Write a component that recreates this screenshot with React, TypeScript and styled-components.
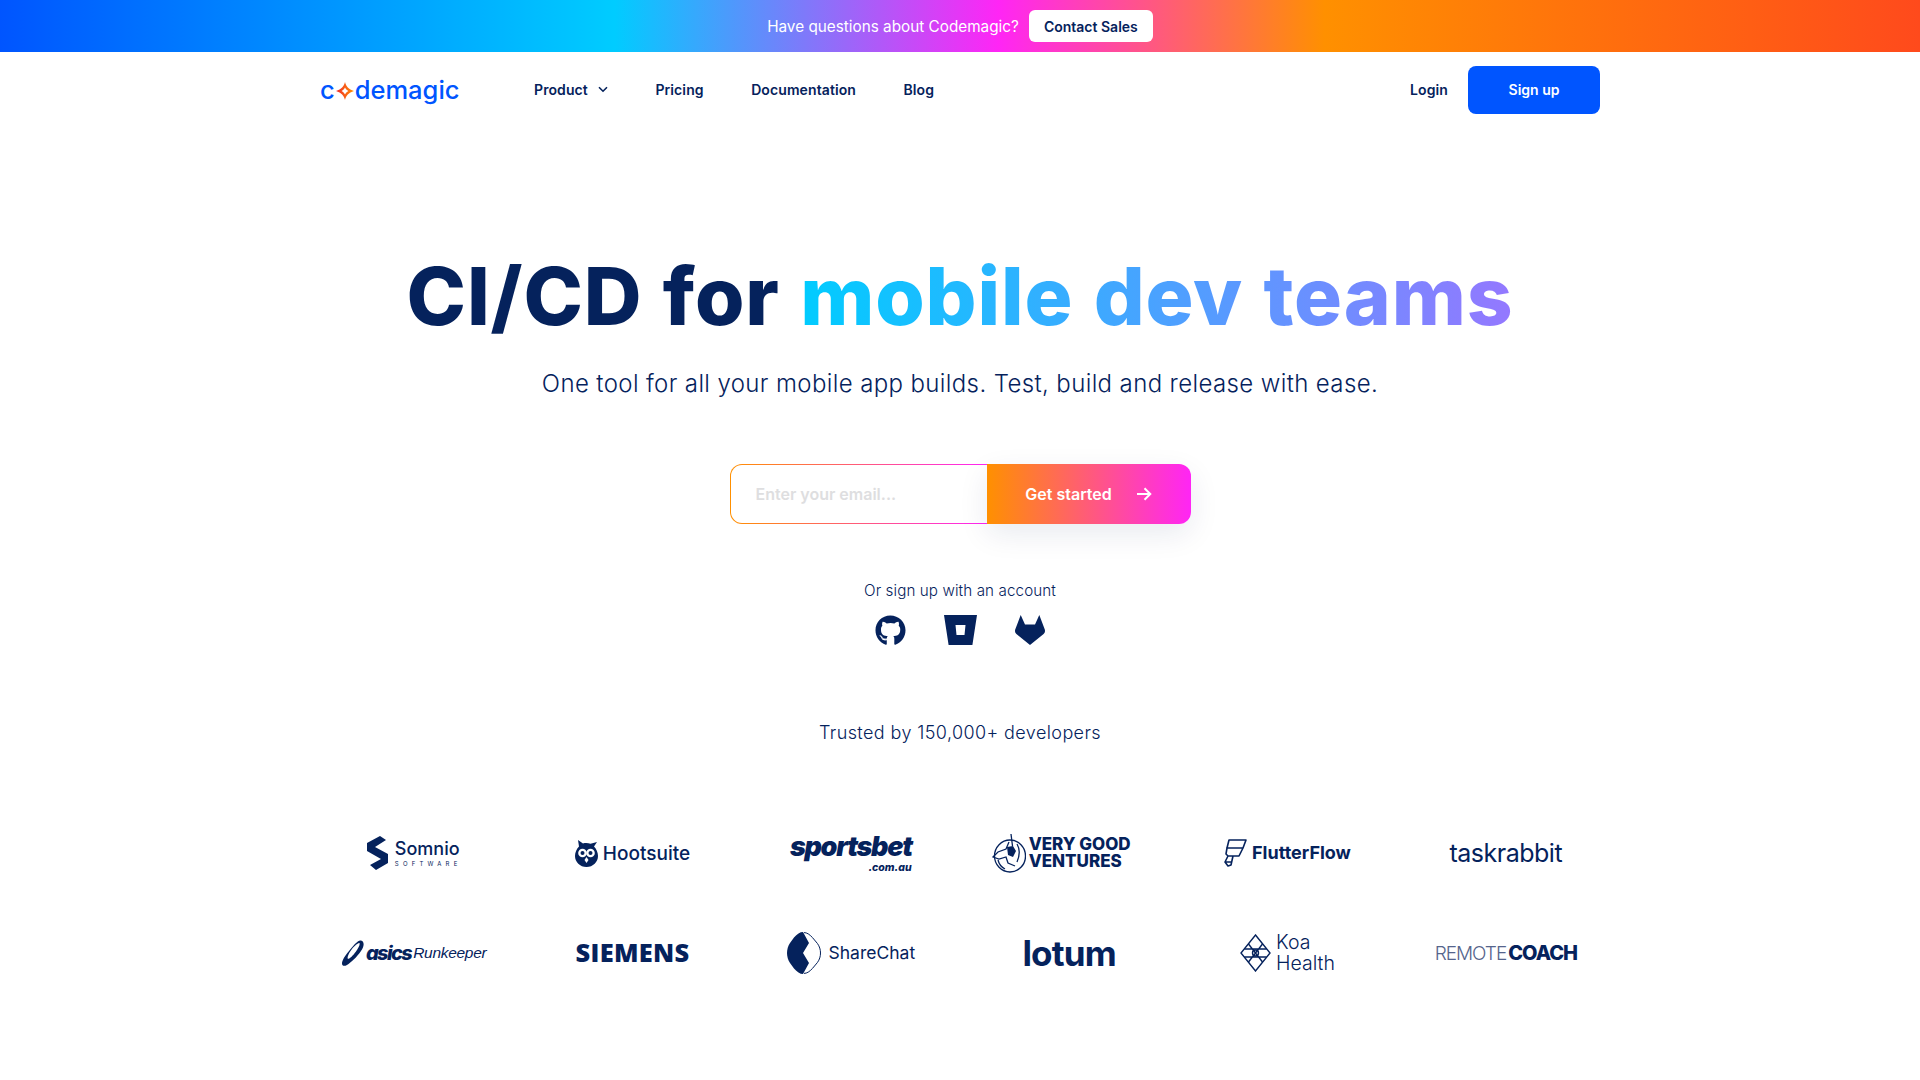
import React from 'react';
import styled, { createGlobalStyle } from 'styled-components';
import { FaGithub } from 'react-icons/fa';

const navy = '#05225c';
const blue = '#0055ff';

const GlobalStyle = createGlobalStyle`
  html, body {
    margin: 0;
    padding: 0;
    background: #fff;
    color: ${navy};
    font-family: Inter, "Open Sans", sans-serif;
  }
  * {
    box-sizing: border-box;
  }
`;

const Banner = styled.div`
  height: 52px;
  display: flex;
  align-items: center;
  justify-content: center;
  gap: 10px;
  background: linear-gradient(90deg, #0055ff 0%, #00ccff 32%, #ff25f5 52%, #ff9000 69%, #ff4a1c 100%);
`;

const BannerText = styled.span`
  color: #fff;
  font-size: 15.3px;
`;

const ContactButton = styled.a`
  width: 124px;
  height: 32px;
  display: flex;
  align-items: center;
  justify-content: center;
  background: #fff;
  border-radius: 6px;
  color: ${navy};
  font-size: 14px;
  font-weight: 600;
`;

const Container = styled.div`
  width: 1280px;
  margin: 0 auto;
`;

const Nav = styled(Container)`
  height: 75px;
  display: flex;
  align-items: center;
`;

const Logo = styled.div`
  width: 214px;
  display: flex;
  align-items: center;
  color: ${blue};
  font-size: 25.5px;
  font-weight: 500;
  line-height: 1;
  svg {
    margin: 2px 1px 0 1px;
  }
`;

const NavLinks = styled.div`
  flex: 1;
  display: flex;
  align-items: center;
  gap: 47.5px;
`;

const NavLink = styled.a`
  display: flex;
  align-items: center;
  gap: 10px;
  color: ${navy};
  font-size: 14px;
  font-weight: 600;
  letter-spacing: 0.1px;
`;

const SignUp = styled.a`
  width: 132px;
  height: 48px;
  margin-left: 20px;
  display: flex;
  align-items: center;
  justify-content: center;
  background: ${blue};
  border-radius: 8px;
  color: #fff;
  font-size: 14px;
  font-weight: 600;
`;

const Hero = styled.main`
  display: flex;
  flex-direction: column;
  align-items: center;
`;

const Title = styled.h1`
  margin: 119px 0 0;
  font-size: 80px;
  line-height: 100px;
  font-weight: 800;
  letter-spacing: 0.85px;
  word-spacing: 2px;
  color: ${navy};
  white-space: nowrap;
`;

const TitleAccent = styled.span`
  background: linear-gradient(90deg, #00ccff 0%, #9478ff 100%);
  -webkit-background-clip: text;
  background-clip: text;
  color: transparent;
`;

const Subtitle = styled.p`
  margin: 23px 0 0;
  font-size: 24px;
  line-height: 30px;
  font-weight: 300;
  letter-spacing: 0.38px;
`;

const Form = styled.form`
  margin-top: 65px;
  display: flex;
  height: 60px;
  width: 461px;
`;

const EmailInput = styled.input`
  width: 257px;
  height: 60px;
  padding: 0 25px;
  border: 1px solid transparent;
  border-right: 0;
  border-radius: 12px 0 0 12px;
  background: linear-gradient(#fff, #fff) padding-box,
    linear-gradient(90deg, #ff9000, #ff25f5) border-box;
  font: 600 16px Inter, sans-serif;
  outline: none;
  &::placeholder {
    color: #dedee0;
  }
`;

const Submit = styled.button`
  flex: 1;
  display: flex;
  align-items: center;
  justify-content: center;
  gap: 24px;
  border: 0;
  border-radius: 0 12px 12px 0;
  background: linear-gradient(90deg, #ff9000, #ff25f5);
  box-shadow: 0 10px 30px rgba(5, 34, 92, 0.09);
  color: #fff;
  font: 600 16px Inter, sans-serif;
`;

const OrText = styled.p`
  margin: 57px 0 0;
  font-size: 15.2px;
  line-height: 20px;
  font-weight: 300;
  letter-spacing: 0.1px;
`;

const Providers = styled.div`
  margin-top: 14px;
  display: flex;
  gap: 40px;
`;

const ProviderIcon = styled.a`
  width: 30px;
  height: 30px;
  display: flex;
  align-items: center;
  justify-content: center;
  color: ${navy};
  svg {
    flex: none;
  }
`;

const Trusted = styled.p`
  margin: 76px 0 0;
  font-size: 18px;
  line-height: 24px;
  font-weight: 300;
  letter-spacing: 0.4px;
`;

const LogoGrid = styled.div`
  width: 1310px;
  margin-top: 58px;
  display: grid;
  grid-template-columns: repeat(6, 1fr);
  grid-auto-rows: 100px;
  justify-items: center;
  align-items: center;
`;

const Brand = styled.div<{ $gap?: number; $pull?: number }>`
  display: flex;
  align-items: center;
  gap: ${p => p.$gap ?? 6}px;
  margin-right: ${p => p.$pull ?? 0}px;
  color: ${navy};
  white-space: nowrap;
`;

const Word = styled.span<{
  $size: number;
  $weight?: number;
  $spacing?: number;
  $italic?: boolean;
  $family?: string;
  $color?: string;
}>`
  display: block;
  font-size: ${p => p.$size}px;
  font-weight: ${p => p.$weight ?? 500};
  letter-spacing: ${p => p.$spacing ?? 0}px;
  font-style: ${p => (p.$italic ? 'italic' : 'normal')};
  font-family: ${p => p.$family ?? 'Inter'}, sans-serif;
  color: ${p => p.$color ?? navy};
  line-height: 1;
`;

const Stack = styled.div<{ $align?: string; $gap?: number }>`
  display: flex;
  flex-direction: column;
  align-items: ${p => p.$align ?? 'flex-start'};
  gap: ${p => p.$gap ?? 0}px;
`;

const Chevron = () => (
  <svg width="10" height="7" viewBox="0 0 10 7" fill="none" stroke={navy} strokeWidth="1.6">
    <path d="M1 1.2l4 4 4-4" />
  </svg>
);

const Arrow = () => (
  <svg width="16" height="14" viewBox="0 0 16 14" fill="none" stroke="#fff" strokeWidth="2">
    <path d="M1 7h13M8.5 1.2L14.3 7l-5.8 5.8" />
  </svg>
);

const MagicStar = () => (
  <svg width="18" height="18" viewBox="0 0 18 18">
    <defs>
      <linearGradient id="magic" x1="0" y1="0" x2="1" y2="0">
        <stop offset="0" stopColor="#f02a2a" />
        <stop offset="1" stopColor="#ff9000" />
      </linearGradient>
    </defs>
    <path
      fill="url(#magic)"
      fillRule="evenodd"
      d="M9 0c1 4.400 3.600 7.400 9 9-5.400 1.600-8 4.600-9 9-1-4.400-3.600-7.400-9-9 5.400-1.600 8-4.600 9-9zm0 5.500C8.300 7 7.200 8.100 5.600 9 7.200 9.900 8.300 11 9 12.500 9.700 11 10.800 9.900 12.400 9 10.800 8.100 9.700 7 9 5.500z"
    />
  </svg>
);

const BitbucketIcon = () => (
  <svg width="33" height="30" viewBox="0 0 33 30">
    <path
      fill={navy}
      fillRule="evenodd"
      d="M0 0h33l-4.600 30H4.600L0 0zm11.500 10l1 10h8l1-10h-10z"
    />
  </svg>
);

const GitlabIcon = () => (
  <svg width="30" height="30" viewBox="0 0 30 30">
    <path
      fill={navy}
      d="M5.700 0l4.300 9.500h10L24.300 0l5.300 14c.7 1.800.6 3.600-1 5L15 30 1.400 19c-1.600-1.400-1.700-3.200-1-5L5.700 0z"
    />
  </svg>
);

const SomnioMark = () => (
  <svg width="22" height="34" viewBox="0 0 22 34">
    <path fill={navy} d="M0 7L13 0l6 4-11 7 13 7v9L9 34l-6-5 11-6L0 15z" />
  </svg>
);

const Owl = () => (
  <svg width="23" height="27" viewBox="0 0 23 27">
    <path
      fill={navy}
      d="M3 0l5 3.500c2.500-.6 5-.5 7.500.3L22 2l-3 4.500c2.500 2.500 4 6 4 9.500 0 6-5 11-11.500 11S0 22 0 16c0-3.500 1.500-7 4-9.500L3 0z"
    />
    <circle cx="7.500" cy="13" r="4.300" fill="#fff" />
    <circle cx="15.500" cy="13" r="4.300" fill="#fff" />
    <circle cx="7.500" cy="13" r="2" fill={navy} />
    <circle cx="15.500" cy="13" r="2" fill={navy} />
    <path fill="#fff" d="M11.500 17l2 3-2 3-2-3z" />
  </svg>
);

const Unicorn = () => (
  <svg width="34" height="40" viewBox="0 0 34 40" fill="none" stroke={navy} strokeWidth="1.300">
    <ellipse cx="18" cy="23" rx="15.500" ry="16" />
    <path d="M19 1l1.500 12M17 9l-3 7-8 3-5 5 6 2 7-2 2 6 7 3" />
    <path d="M25 11c3 5 3 11 0 18M6 27c1 4 3 7 7 9" />
    <path fill={navy} stroke="none" d="M15 14l6-1 3 5-3 6-5-2z" />
  </svg>
);

const FlutterMark = () => (
  <svg width="23" height="28" viewBox="0 0 23 28" fill="none" stroke={navy} strokeWidth="1.600" strokeLinejoin="round">
    <path d="M5 1h17l-3 8H3zM3 9l-1 6 2 2h11l4-8M4 17l-3 6 3 4 3-1 2-9M1 23h6" />
  </svg>
);

const AsicsMark = () => (
  <svg width="22" height="26" viewBox="0 0 22 26">
    <path
      fill={navy}
      fillRule="evenodd"
      d="M19 .5c3.500 1 3.500 5.500 0 10.500C15 17 9 22.500 5 25c-2.800 1.500-5 1-5-1.500C0 20.500 3 15.500 7 11 11 6 16-.5 19 .5zm-1.500 2.500C14.500 3.500 11 7.500 8.500 11 6.500 14 5 17.500 5.800 18.800c1.500.6 5-3 8-7 2.500-3.300 4.500-7.300 3.700-8.800z"
    />
  </svg>
);

const ShareChatMark = () => (
  <svg width="34" height="42" viewBox="0 0 34 42">
    <path
      fill="none"
      stroke={navy}
      d="M17 .6c3 0 5.500 1.800 8.500 5l5 6c2 2.800 3 6 3 9.400s-1 6.600-3 9.400l-5 6c-3 3.200-5.500 5-8.500 5"
    />
    <path
      fill={navy}
      d="M16 0c-3 0-6 2-9 5.500l-4 5.500C1 14 0 17.500 0 21s1 7 3 10l4 5.500C10 40 13 42 16 42l6-11-6-10 6-10-6-11z"
    />
  </svg>
);

const KoaMark = () => (
  <svg width="31" height="38" viewBox="0 0 31 38" fill="none" stroke={navy} strokeWidth="1.400">
    <path d="M15.500 1L30 19 15.500 37 1 19z" />
    <path d="M8.500 10L22.500 28M22.500 10L8.500 28M4.500 15h22M4.500 23h22" />
    <circle cx="15.500" cy="19" r="3" />
  </svg>
);

export default function App() {
  return (
    <>
      <GlobalStyle />
      <Banner>
        <BannerText>Have questions about Codemagic?</BannerText>
        <ContactButton>Contact Sales</ContactButton>
      </Banner>
      <Nav>
        <Logo>
          c<MagicStar />demagic
        </Logo>
        <NavLinks>
          <NavLink>
            Product <Chevron />
          </NavLink>
          <NavLink>Pricing</NavLink>
          <NavLink>Documentation</NavLink>
          <NavLink>Blog</NavLink>
        </NavLinks>
        <NavLink>Login</NavLink>
        <SignUp>Sign up</SignUp>
      </Nav>
      <Hero>
        <Title>
          CI/CD for <TitleAccent>mobile dev teams</TitleAccent>
        </Title>
        <Subtitle>One tool for all your mobile app builds. Test, build and release with ease.</Subtitle>
        <Form>
          <EmailInput placeholder="Enter your email..." />
          <Submit type="button">
            Get started <Arrow />
          </Submit>
        </Form>
        <OrText>Or sign up with an account</OrText>
        <Providers>
          <ProviderIcon>
            <FaGithub size={31} />
          </ProviderIcon>
          <ProviderIcon>
            <BitbucketIcon />
          </ProviderIcon>
          <ProviderIcon>
            <GitlabIcon />
          </ProviderIcon>
        </Providers>
        <Trusted>Trusted by 150,000+ developers</Trusted>
        <LogoGrid>
          <Brand $gap={6}>
            <SomnioMark />
            <Stack $gap={3}>
              <Word $size={18} $weight={500}>Somnio</Word>
              <Word $size={6} $spacing={4.200} $weight={400}>SOFTWARE</Word>
            </Stack>
          </Brand>
          <Brand $gap={5}>
            <Owl />
            <Word $size={19} $weight={500}>Hootsuite</Word>
          </Brand>
          <Brand>
            <Stack $align="flex-end" $gap={3}>
              <Word $size={27} $weight={900} $italic $spacing={-1.300}>sportsbet</Word>
              <Word $size={10.500} $weight={800} $italic>.com.au</Word>
            </Stack>
          </Brand>
          <Brand $gap={3} $pull={16}>
            <Unicorn />
            <Stack>
              <Word $size={17} $weight={800}>VERY GOOD</Word>
              <Word $size={17} $weight={800}>VENTURES</Word>
            </Stack>
          </Brand>
          <Brand $gap={5}>
            <FlutterMark />
            <Word $size={18} $weight={700}>FlutterFlow</Word>
          </Brand>
          <Word $size={25} $weight={400} $spacing={-0.500}>taskrabbit</Word>
          <Brand $gap={2}>
            <AsicsMark />
            <Word $size={20} $weight={800} $italic $spacing={-1.600}>asics</Word>
            <Word $size={15.500} $weight={400} $italic $spacing={-0.300} $family="'Liberation Sans'">Runkeeper</Word>
          </Brand>
          <Word $size={25.400} $weight={800} $spacing={0.300} $family="'Open Sans'">SIEMENS</Word>
          <Brand $gap={8}>
            <ShareChatMark />
            <Word $size={17.500} $weight={400}>ShareChat</Word>
          </Brand>
          <Word $size={35} $weight={700} $spacing={-0.800}>lotum</Word>
          <Brand $gap={5}>
            <KoaMark />
            <Stack $gap={2}>
              <Word $size={19.500} $weight={300}>Koa</Word>
              <Word $size={19.500} $weight={300}>Health</Word>
            </Stack>
          </Brand>
          <Brand $gap={2}>
            <Word $size={19} $weight={300} $spacing={-1} $color="#55648c">REMOTE</Word>
            <Word $size={20} $weight={800} $spacing={-1}>COACH</Word>
          </Brand>
        </LogoGrid>
      </Hero>
    </>
  );
}
